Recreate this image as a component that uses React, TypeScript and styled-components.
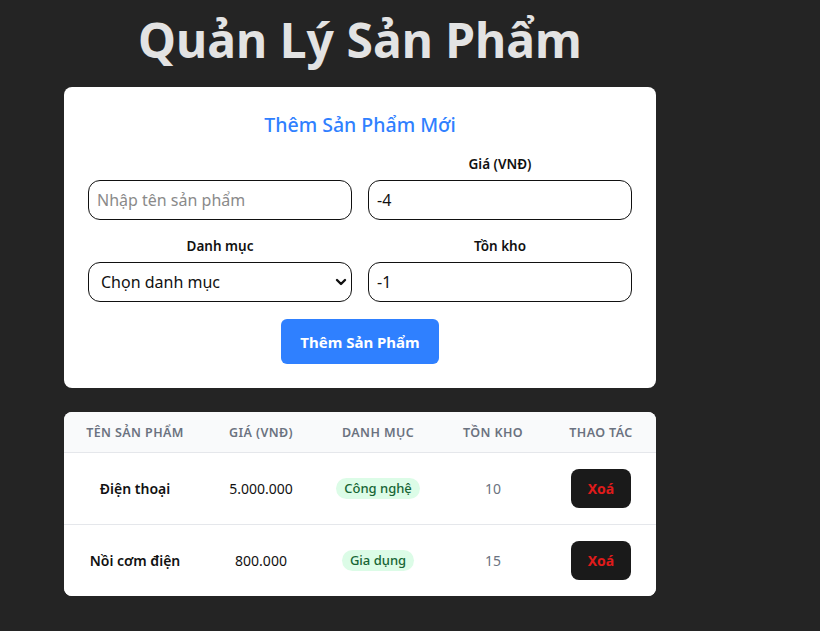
import styled, { createGlobalStyle } from "styled-components";

const GlobalStyle = createGlobalStyle`
    * {
        box-sizing: border-box;
    }
    body {
        margin: 0;
        background: #242424;
        font-family: "Segoe UI", "Noto Sans", "Open Sans", sans-serif;
        color: rgba(255, 255, 255, 0.87);
    }
`;

const Page = styled.div`
    width: 592px;
    margin-left: 64px;
    padding-bottom: 32px;
`;

const Title = styled.h1`
    margin: 5px 0 13px 0;
    font-size: 48px;
    line-height: 69px;
    font-weight: 700;
    text-align: center;
    color: #e3e3e3;
`;

const Card = styled.div`
    background: #ffffff;
    border-radius: 8px;
    padding: 24px;
`;

const CardTitle = styled.h2`
    margin: 0 0 16px 0;
    font-size: 19.5px;
    line-height: 28px;
    font-weight: 500;
    text-align: center;
    color: #2f80ff;
`;

const FormGrid = styled.div`
    display: grid;
    grid-template-columns: 1fr 1fr;
    column-gap: 16px;
    row-gap: 17px;
`;

const Field = styled.div`
    display: flex;
    flex-direction: column;
    gap: 7px;
`;

const Label = styled.label`
    min-height: 18px;
    font-size: 13.5px;
    line-height: 18px;
    font-weight: 600;
    text-align: center;
    color: #111111;
`;

const Input = styled.input`
    width: 100%;
    height: 40px;
    padding: 0 8px;
    border: 1px solid #111111;
    border-radius: 12px;
    background: #ffffff;
    font-family: inherit;
    font-size: 16px;
    color: #111111;
    outline: none;

    &::placeholder {
        color: #8a8a8a;
    }
`;

const SelectWrap = styled.div`
    position: relative;
`;

const Select = styled.select`
    width: 100%;
    height: 40px;
    padding: 0 12px;
    border: 1px solid #111111;
    border-radius: 12px;
    background: #ffffff;
    font-family: inherit;
    font-size: 16px;
    color: #111111;
    appearance: none;
    outline: none;
`;

const Chevron = styled.svg`
    position: absolute;
    right: 5px;
    top: 15px;
    pointer-events: none;
`;

const Actions = styled.div`
    display: flex;
    justify-content: center;
    margin-top: 17px;
`;

const PrimaryButton = styled.button`
    width: 158px;
    height: 45px;
    border: none;
    border-radius: 6px;
    background: #2f80ff;
    color: #ffffff;
    font-family: inherit;
    font-size: 15px;
    font-weight: 700;
`;

const TableCard = styled.div`
    margin-top: 24px;
    background: #ffffff;
    border-radius: 8px;
    overflow: hidden;
`;

const Row = styled.div<{ $head?: boolean }>`
    display: grid;
    grid-template-columns: 142px 110px 124px 106px 110px;
    align-items: center;
    height: ${(p) => (p.$head ? "41px" : "72px")};
    background: ${(p) => (p.$head ? "#f9fafb" : "#ffffff")};
    border-bottom: 1px solid #e5e7eb;

    &:last-child {
        height: 71px;
        border-bottom: none;
    }
`;

const HeadCell = styled.div`
    text-align: center;
    font-size: 12.5px;
    font-weight: 600;
    letter-spacing: 0.4px;
    text-transform: uppercase;
    color: #6b7280;
`;

const Cell = styled.div<{ $bold?: boolean; $muted?: boolean }>`
    display: flex;
    justify-content: center;
    font-size: 14px;
    font-weight: ${(p) => (p.$bold ? 600 : 400)};
    color: ${(p) => (p.$muted ? "#6b7280" : "#111111")};
`;

const Badge = styled.span`
    padding: 1px 8px 2px;
    border-radius: 999px;
    background: #dcfce7;
    color: #166534;
    font-size: 13px;
    font-weight: 500;
`;

const DeleteButton = styled.button`
    width: 60px;
    height: 39px;
    border: none;
    border-radius: 8px;
    background: #1a1a1a;
    color: #e01b1b;
    font-family: inherit;
    font-size: 14px;
    font-weight: 700;
`;

type Product = {
    name: string;
    price: string;
    category: string;
    stock: number;
};

const products: Product[] = [
    { name: "Điện thoại", price: "5.000.000", category: "Công nghệ", stock: 10 },
    { name: "Nồi cơm điện", price: "800.000", category: "Gia dụng", stock: 15 },
];

const App = () => {
    return (
        <>
            <GlobalStyle />
            <Page>
                <Title>Quản Lý Sản Phẩm</Title>
                <Card>
                    <CardTitle>Thêm Sản Phẩm Mới</CardTitle>
                    <FormGrid>
                        <Field>
                            <Label></Label>
                            <Input placeholder="Nhập tên sản phẩm" />
                        </Field>
                        <Field>
                            <Label>Giá (VNĐ)</Label>
                            <Input type="number" defaultValue="-4" />
                        </Field>
                        <Field>
                            <Label>Danh mục</Label>
                            <SelectWrap>
                                <Select defaultValue="">
                                    <option value="">Chọn danh mục</option>
                                    <option value="tech">Công nghệ</option>
                                    <option value="home">Gia dụng</option>
                                </Select>
                                <Chevron width="12" height="10" viewBox="0 0 12 10">
                                    <path
                                        d="M2 3l4 4 4-4"
                                        fill="none"
                                        stroke="#111"
                                        strokeWidth="2.4"
                                        strokeLinecap="round"
                                        strokeLinejoin="round"
                                    />
                                </Chevron>
                            </SelectWrap>
                        </Field>
                        <Field>
                            <Label>Tồn kho</Label>
                            <Input type="number" defaultValue="-1" />
                        </Field>
                    </FormGrid>
                    <Actions>
                        <PrimaryButton>Thêm Sản Phẩm</PrimaryButton>
                    </Actions>
                </Card>
                <TableCard>
                    <Row $head>
                        <HeadCell>Tên sản phẩm</HeadCell>
                        <HeadCell>Giá (VNĐ)</HeadCell>
                        <HeadCell>Danh mục</HeadCell>
                        <HeadCell>Tồn kho</HeadCell>
                        <HeadCell>Thao tác</HeadCell>
                    </Row>
                    {products.map((p) => (
                        <Row key={p.name}>
                            <Cell $bold>{p.name}</Cell>
                            <Cell>{p.price}</Cell>
                            <Cell>
                                <Badge>{p.category}</Badge>
                            </Cell>
                            <Cell $muted>{p.stock}</Cell>
                            <Cell>
                                <DeleteButton>Xoá</DeleteButton>
                            </Cell>
                        </Row>
                    ))}
                </TableCard>
            </Page>
        </>
    );
};

export default App;
